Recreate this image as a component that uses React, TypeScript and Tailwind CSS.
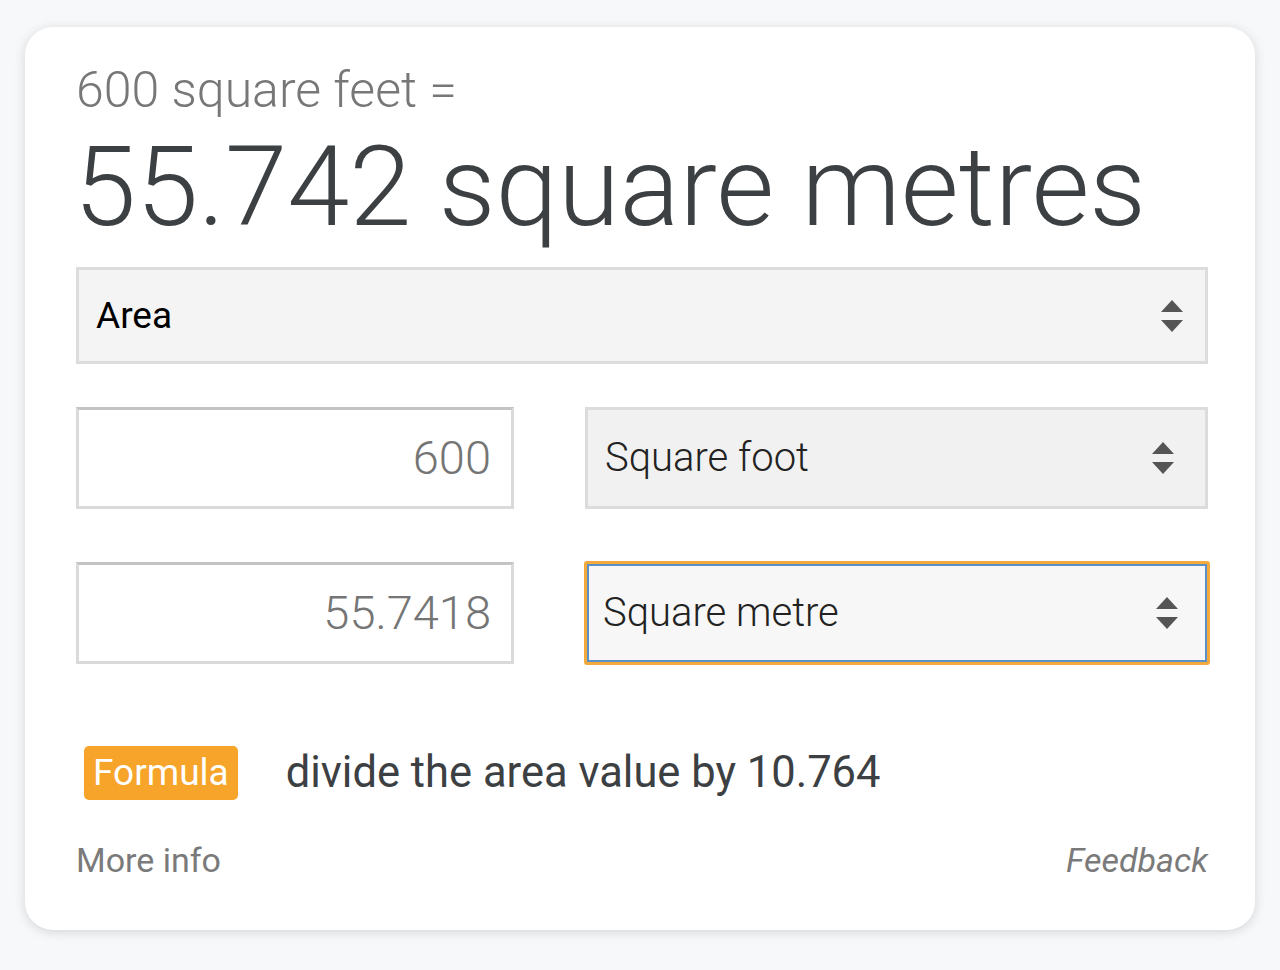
import React from "react";

function UpDown({ className = "" }: { className?: string }) {
  return (
    <svg width="24" height="36" viewBox="0 0 24 36" className={className} aria-hidden>
      <path d="M12 2 L23 14 L1 14 Z" fill="#555" />
      <path d="M12 34 L23 22 L1 22 Z" fill="#555" />
    </svg>
  );
}

function NumberBox({ value }: { value: string }) {
  return (
    <div className="flex h-[102px] w-[438px] items-center justify-end border-[3px] border-[#dadada] border-t-[#c4c4c4] bg-white pr-[20px] text-[47px] font-light text-[#757575]">
      {value}
    </div>
  );
}

function UnitSelect({ label, active = false }: { label: string; active?: boolean }) {
  return (
    <div
      className={
        active
          ? "flex h-[104px] w-[626px] items-center justify-between rounded-[3px] border-[3px] border-[#f3a93c] bg-[#f7f7f7] pl-[16px] pr-[28px] shadow-[inset_0_0_0_2px_#5b8fc7]"
          : "flex h-[102px] w-[623px] items-center justify-between border-[3px] border-[#dcdcdc] bg-[#f1f1f1] pl-[17px] pr-[30px]"
      }
    >
      <span className="text-[40px] font-light text-[#222]">{label}</span>
      <UpDown />
    </div>
  );
}

export default function App() {
  return (
    <div
      className="h-[970px] overflow-hidden bg-[#f7f8f9] px-[25px] pt-[27px]"
      style={{ fontFamily: "Roboto, 'Liberation Sans', sans-serif" }}
    >
      <div className="h-[903px] rounded-[28px] bg-white px-[51px] pt-[38px] shadow-[0_2px_12px_rgba(0,0,0,0.14)]">
        <div className="text-[50px] font-light leading-none text-[#777]">600 square feet =</div>
        <div className="-ml-[2px] mt-[16px] whitespace-nowrap text-[112px] font-light leading-none text-[#3c4043]">
          55.742 square metres
        </div>

        <div className="mt-[24px] flex h-[97px] w-[1132px] items-center justify-between border-[3px] border-[#dcdcdc] bg-[#f4f4f4] pl-[17px] pr-[21px]">
          <span className="text-[37px] text-black">Area</span>
          <UpDown />
        </div>

        <div className="mt-[43px] flex w-[1132px] items-center justify-between">
          <NumberBox value="600" />
          <UnitSelect label="Square foot" />
        </div>

        <div className="mt-[52px] flex w-[1132px] items-center justify-between">
          <NumberBox value="55.7418" />
          <div className="-mr-[2px]">
            <UnitSelect label="Square metre" active />
          </div>
        </div>

        <div className="mt-[75px] flex items-center">
          <span className="ml-[8px] rounded-[5px] bg-[#f6a42a] px-[9px] py-[5px] text-[37px] leading-[44px] text-white">
            Formula
          </span>
          <span className="ml-[48px] text-[43.5px] text-[#3c4043]">divide the area value by 10.764</span>
        </div>

        <div className="mt-[30px] flex w-[1132px] items-center justify-between text-[34px] text-[#7a7a7a]">
          <span>More info</span>
          <span className="italic">Feedback</span>
        </div>
      </div>
    </div>
  );
}
